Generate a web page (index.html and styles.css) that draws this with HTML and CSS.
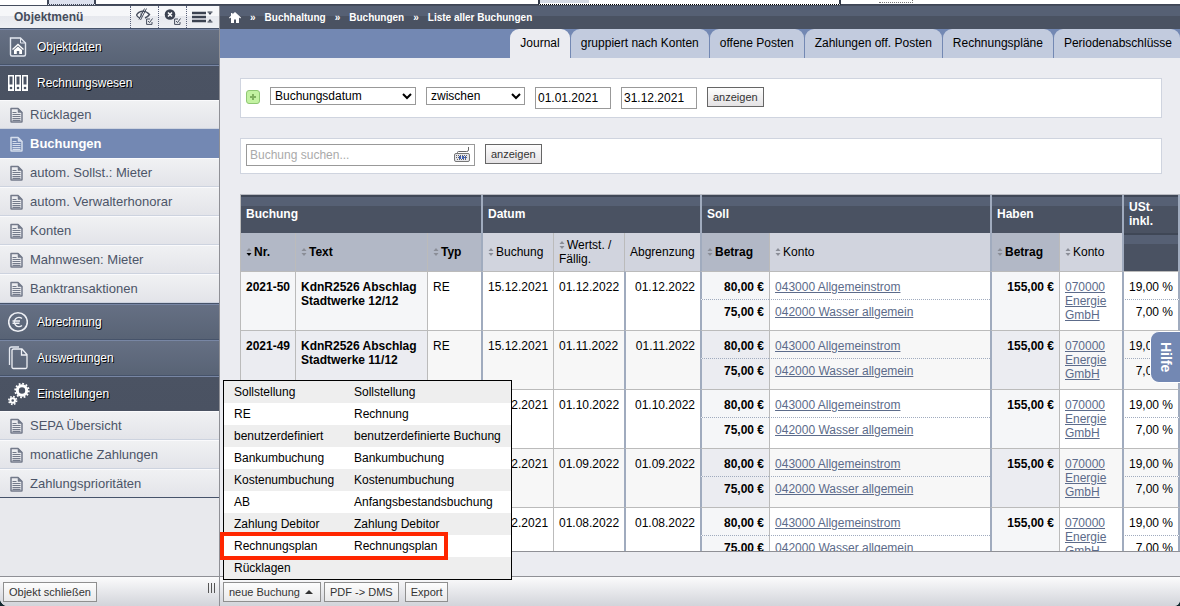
FILE: index.html
```html
<!DOCTYPE html>
<html lang="de">
<head>
  <meta charset="UTF-8" />
  <title>Liste aller Buchungen</title>
  <link rel="stylesheet" href="styles.css">
</head>
<body>

<!-- shared icons -->
<svg class="icon-defs" width="0" height="0" aria-hidden="true">
  <symbol id="icon-doc" viewBox="0 0 14 16">
    <path d="M1.500 1.500h7l4 4v9q0 .5-.5.5h-10q-.5 0-.5-.5z" fill="none" stroke="currentColor" stroke-width="1.500" stroke-linejoin="round"/>
    <path d="M8.500 1.500v4h4z" fill="currentColor" stroke="currentColor" stroke-width=".5"/>
    <path d="M3 5.500h4M3 7.500h8M3 9.500h8M3 11.500h8M3 13.300h8" stroke="currentColor" stroke-width="1.200"/>
  </symbol>
  <symbol id="icon-sort" viewBox="0 0 6 8">
    <path d="M3 0l2.500 3h-5z" fill="#8a8d96"/>
    <path d="M3 8l2.500-3h-5z" fill="currentColor"/>
  </symbol>
  <symbol id="icon-check" viewBox="0 0 7 7">
    <path d="M4 1H.6v5.400H6V4M2 3l1.500 1.600L6.500.5" fill="none" stroke="#454c5c"/>
  </symbol>
</svg>

<div class="app">
  <div class="top-strip">
    <span class="strip-tab"></span>
    <span class="strip-line"></span>
    <span class="strip-panel"><span class="strip-fill"></span></span>
    <span class="strip-rest"><span class="strip-dots"></span></span>
  </div>

  <div class="columns">
    <aside class="sidebar">
      <div class="sidebar-head">
        <h2>Objektmenü</h2>
        <button class="head-btn" aria-label="Ausblenden">
          <svg width="19" height="18" viewBox="0 0 19 18">
            <path d="M1.500 7C4 2.500 10 1.500 14.500 6.500c-1.500 2-3 3-4.500 3.500M1.500 7c.8 1.500 2 2.500 3.200 3" fill="none" stroke="#454c5c" stroke-width="1.400"/>
            <path d="M6.500 4c-1.700 2-1 4.500 0 5z" fill="#454c5c"/>
            <path d="M11.500 .5L5.500 12M9.500 .5L4 11.500" stroke="#454c5c" stroke-width="1"/>
            <use href="#icon-check" x="11" y="10" width="7" height="7"/>
          </svg>
        </button>
        <button class="head-btn" aria-label="Schließen">
          <svg width="19" height="18" viewBox="0 0 19 18">
            <circle cx="7" cy="6.500" r="5.300" fill="#3b4250"/>
            <path d="M5 4.500l4 4m0-4l-4 4" stroke="#fff" stroke-width="1.600"/>
            <use href="#icon-check" x="11" y="10" width="7" height="7"/>
          </svg>
        </button>
        <button class="head-btn head-btn-wide" aria-label="Menü einklappen">
          <svg width="22" height="14" viewBox="0 0 22 14">
            <path d="M0 3h14M0 7h14M0 11h14" stroke="#3b4250" stroke-width="2.600"/>
            <path d="M15.500 2h5M15.500 12h5" stroke="#3b4250"/>
            <path d="M16 2.500h4l-2 2.500zM16 11.500h4l-2-2.500z" fill="#3b4250"/>
          </svg>
        </button>
      </div>

      <nav>
        <a class="group" href="#">
          <svg width="20" height="22" viewBox="0 0 20 22">
            <path d="M2.500 2h10l5 5v11.500q0 1.500-1.500 1.500h-12q-1.500 0-1.500-1.500z" fill="none" stroke="#e4e8f0" stroke-width="1.400"/>
            <path d="M12.500 2v5h5" fill="none" stroke="#e4e8f0"/>
            <path d="M4.500 13.500L10 8.500l5.500 5" fill="none" stroke="#fff" stroke-width="1.300"/>
            <path d="M6 14l4-3.500 4 3.500v4h-2.800v-3H8.800v3H6z" fill="#fff"/>
          </svg>
          Objektdaten
        </a>
        <a class="group open" href="#">
          <svg width="20" height="18" viewBox="0 0 20 18">
            <g fill="#fff"><path d="M0 1h6v16H0zM7 1h6v16H7zM14 1h6v16h-6z"/></g>
            <g fill="#4a5263"><path d="M1.500 2.500h3v8h-3zM8.500 2.500h3v8h-3zM15.500 2.500h3v8h-3z"/><circle cx="3" cy="14" r="1.300"/><circle cx="10" cy="14" r="1.300"/><circle cx="17" cy="14" r="1.300"/></g>
          </svg>
          Rechnungswesen
        </a>
        <a class="item" href="#"><svg><use href="#icon-doc"/></svg>Rücklagen</a>
        <a class="item active" href="#"><svg><use href="#icon-doc"/></svg>Buchungen</a>
        <a class="item" href="#"><svg><use href="#icon-doc"/></svg>autom. Sollst.: Mieter</a>
        <a class="item" href="#"><svg><use href="#icon-doc"/></svg>autom. Verwalterhonorar</a>
        <a class="item" href="#"><svg><use href="#icon-doc"/></svg>Konten</a>
        <a class="item" href="#"><svg><use href="#icon-doc"/></svg>Mahnwesen: Mieter</a>
        <a class="item" href="#"><svg><use href="#icon-doc"/></svg>Banktransaktionen</a>
        <a class="group" href="#">
          <svg width="20" height="22" viewBox="0 0 20 22">
            <circle cx="10" cy="11" r="9.300" fill="none" stroke="#eef0f5" stroke-width="1.600"/>
            <path d="M14 7.500a4.600 4.600 0 1 0 0 7M4.500 10h7.500M4.500 12.200h7" fill="none" stroke="#eef0f5" stroke-width="1.400"/>
          </svg>
          Abrechnung
        </a>
        <a class="group" href="#">
          <svg width="20" height="24" viewBox="0 0 20 24">
            <path d="M1.500 19V3q0-2 2-2H11" fill="none" stroke="#e4e8f0" stroke-width="1.300"/>
            <path d="M5.500 3h8.500l5 5.500v12.500q0 1.500-1.500 1.500h-12q-1.500 0-1.500-1.500v-16.500q0-1.500 1.500-1.500zM13.500 3v6H19" fill="none" stroke="#eef0f5" stroke-width="1.300"/>
          </svg>
          Auswertungen
        </a>
        <a class="group open" href="#">
          <svg width="24" height="24" viewBox="0 0 24 24">
            <circle cx="14" cy="8.500" r="4.700" fill="none" stroke="#fff" stroke-width="3"/>
            <circle cx="14" cy="8.500" r="6.800" fill="none" stroke="#fff" stroke-width="1.800" stroke-dasharray="1.800 1.760"/>
            <circle cx="4.700" cy="18.500" r="2.300" fill="none" stroke="#fff" stroke-width="2"/>
            <circle cx="4.700" cy="18.500" r="3.900" fill="none" stroke="#fff" stroke-width="1.600" stroke-dasharray="1.600 1.460"/>
          </svg>
          Einstellungen
        </a>
        <a class="item" href="#"><svg><use href="#icon-doc"/></svg>SEPA Übersicht</a>
        <a class="item" href="#"><svg><use href="#icon-doc"/></svg>monatliche Zahlungen</a>
        <a class="item" href="#"><svg><use href="#icon-doc"/></svg>Zahlungsprioritäten</a>
      </nav>

      <div class="footer sidebar-footer">
        <button class="foot-btn">Objekt schließen</button>
        <span class="grip"></span>
      </div>
    </aside>

    <main class="main">
      <div class="breadcrumb">
        <a href="#" aria-label="Start">
          <svg width="12" height="11" viewBox="0 0 12 11"><path d="M6 0l6 5.500-.8.900L10 5.500V11H7V7.500H5V11H2V5.500l-1.200.9L0 5.500 2 3.700V1h1.500v1.300z" fill="#fff"/></svg>
        </a>
        <span>»</span>
        <a href="#">Buchhaltung</a>
        <span>»</span>
        <a href="#">Buchungen</a>
        <span>»</span>
        <a href="#">Liste aller Buchungen</a>
      </div>

      <div class="tabs">
        <a class="tab active" href="#">Journal</a>
        <a class="tab" href="#">gruppiert nach Konten</a>
        <a class="tab" href="#">offene Posten</a>
        <a class="tab" href="#">Zahlungen off. Posten</a>
        <a class="tab" href="#">Rechnungspläne</a>
        <a class="tab" href="#">Periodenabschlüsse</a>
      </div>

      <div class="content">
        <form class="panel filter-panel">
          <button type="button" class="add-btn" aria-label="Filter hinzufügen">
            <svg width="8" height="8" viewBox="0 0 8 8"><path d="M4 1v6M1 4h6" stroke="#7fb060" stroke-width="2"/></svg>
          </button>
          <select class="field-select" aria-label="Feld"><option>Buchungsdatum</option></select>
          <select class="op-select" aria-label="Vergleich"><option>zwischen</option></select>
          <input class="date-input" type="text" value="01.01.2021" aria-label="von">
          <input class="date-input" type="text" value="31.12.2021" aria-label="bis">
          <button type="button" class="show-btn">anzeigen</button>
        </form>

        <form class="panel search-panel">
          <div class="search-box">
            <input type="text" placeholder="Buchung suchen..." aria-label="Buchung suchen">
            <svg width="16" height="15" viewBox="0 0 16 15">
              <path d="M3.500 6V5.500q0-1 1-1h8q2 0 2-1.500V0" fill="none" stroke="#666"/>
              <rect x=".5" y="6.500" width="15" height="8" rx="1.500" fill="#e6e6ea" stroke="#777"/>
              <path d="M2 8.500h12M2 10.500h12M3 12.500h10" stroke="#666" stroke-dasharray="1 1"/>
              <path d="M5 10.500h7" stroke="#3f5fb0" stroke-width="3" stroke-dasharray="2 1"/>
            </svg>
          </div>
          <button type="button" class="show-btn">anzeigen</button>
        </form>

        <div class="table-wrap">
          <table class="journal">
            <colgroup>
              <col class="c-nr"><col class="c-text"><col class="c-typ">
              <col class="c-date"><col class="c-value"><col class="c-accrual">
              <col class="c-amount"><col>
              <col class="c-amount"><col class="c-account"><col class="c-tax">
            </colgroup>
            <thead>
              <tr class="head-main">
                <th colspan="3">Buchung</th>
                <th class="sep" colspan="3">Datum</th>
                <th class="sep" colspan="2">Soll</th>
                <th class="sep" colspan="2">Haben</th>
                <th class="sep end">USt. inkl.</th>
              </tr>
              <tr class="head-sub">
                <th class="key"><svg class="sort sorted"><use href="#icon-sort"/></svg>Nr.</th>
                <th class="key"><svg class="sort"><use href="#icon-sort"/></svg>Text</th>
                <th class="key"><svg class="sort"><use href="#icon-sort"/></svg>Typ</th>
                <th class="sep"><svg class="sort"><use href="#icon-sort"/></svg>Buchung</th>
                <th><svg class="sort"><use href="#icon-sort"/></svg>Wertst. / Fällig.</th>
                <th>Abgrenzung</th>
                <th class="sep key"><svg class="sort"><use href="#icon-sort"/></svg>Betrag</th>
                <th><svg class="sort"><use href="#icon-sort"/></svg>Konto</th>
                <th class="sep key"><svg class="sort"><use href="#icon-sort"/></svg>Betrag</th>
                <th><svg class="sort"><use href="#icon-sort"/></svg>Konto</th>
                <th class="sep end dark"></th>
              </tr>
            </thead>
            <tbody>
              <tr>
                <td class="key nr" rowspan="2">2021-50</td>
                <td class="key" rowspan="2">KdnR2526 Abschlag Stadtwerke 12/12</td>
                <td rowspan="2">RE</td>
                <td class="sep" rowspan="2">15.12.2021</td>
                <td rowspan="2">01.12.2022</td>
                <td class="sep num" rowspan="2">01.12.2022</td>
                <td class="sep key num">80,00 €</td>
                <td><a href="#">043000 Allgemeinstrom</a></td>
                <td class="sep key num" rowspan="2">155,00 €</td>
                <td rowspan="2"><a href="#">070000 Energie GmbH</a></td>
                <td class="sep end num">19,00 %</td>
              </tr>
              <tr class="split">
                <td class="sep key num">75,00 €</td>
                <td><a href="#">042000 Wasser allgemein</a></td>
                <td class="sep end num">7,00 %</td>
              </tr>
            </tbody>
            <tbody>
              <tr>
                <td class="key nr" rowspan="2">2021-49</td>
                <td class="key" rowspan="2">KdnR2526 Abschlag Stadtwerke 11/12</td>
                <td rowspan="2">RE</td>
                <td class="sep" rowspan="2">15.12.2021</td>
                <td rowspan="2">01.11.2022</td>
                <td class="sep num" rowspan="2">01.11.2022</td>
                <td class="sep key num">80,00 €</td>
                <td><a href="#">043000 Allgemeinstrom</a></td>
                <td class="sep key num" rowspan="2">155,00 €</td>
                <td rowspan="2"><a href="#">070000 Energie GmbH</a></td>
                <td class="sep end num">19,00 %</td>
              </tr>
              <tr class="split">
                <td class="sep key num">75,00 €</td>
                <td><a href="#">042000 Wasser allgemein</a></td>
                <td class="sep end num">7,00 %</td>
              </tr>
            </tbody>
            <tbody>
              <tr>
                <td class="key nr" rowspan="2">2021-48</td>
                <td class="key" rowspan="2">KdnR2526 Abschlag Stadtwerke 10/12</td>
                <td rowspan="2">RE</td>
                <td class="sep" rowspan="2">15.12.2021</td>
                <td rowspan="2">01.10.2022</td>
                <td class="sep num" rowspan="2">01.10.2022</td>
                <td class="sep key num">80,00 €</td>
                <td><a href="#">043000 Allgemeinstrom</a></td>
                <td class="sep key num" rowspan="2">155,00 €</td>
                <td rowspan="2"><a href="#">070000 Energie GmbH</a></td>
                <td class="sep end num">19,00 %</td>
              </tr>
              <tr class="split">
                <td class="sep key num">75,00 €</td>
                <td><a href="#">042000 Wasser allgemein</a></td>
                <td class="sep end num">7,00 %</td>
              </tr>
            </tbody>
            <tbody>
              <tr>
                <td class="key nr" rowspan="2">2021-47</td>
                <td class="key" rowspan="2">KdnR2526 Abschlag Stadtwerke 9/12</td>
                <td rowspan="2">RE</td>
                <td class="sep" rowspan="2">15.12.2021</td>
                <td rowspan="2">01.09.2022</td>
                <td class="sep num" rowspan="2">01.09.2022</td>
                <td class="sep key num">80,00 €</td>
                <td><a href="#">043000 Allgemeinstrom</a></td>
                <td class="sep key num" rowspan="2">155,00 €</td>
                <td rowspan="2"><a href="#">070000 Energie GmbH</a></td>
                <td class="sep end num">19,00 %</td>
              </tr>
              <tr class="split">
                <td class="sep key num">75,00 €</td>
                <td><a href="#">042000 Wasser allgemein</a></td>
                <td class="sep end num">7,00 %</td>
              </tr>
            </tbody>
            <tbody>
              <tr>
                <td class="key nr" rowspan="2">2021-46</td>
                <td class="key" rowspan="2">KdnR2526 Abschlag Stadtwerke 8/12</td>
                <td rowspan="2">RE</td>
                <td class="sep" rowspan="2">15.12.2021</td>
                <td rowspan="2">01.08.2022</td>
                <td class="sep num" rowspan="2">01.08.2022</td>
                <td class="sep key num">80,00 €</td>
                <td><a href="#">043000 Allgemeinstrom</a></td>
                <td class="sep key num" rowspan="2">155,00 €</td>
                <td rowspan="2"><a href="#">070000 Energie GmbH</a></td>
                <td class="sep end num">19,00 %</td>
              </tr>
              <tr class="split">
                <td class="sep key num">75,00 €</td>
                <td><a href="#">042000 Wasser allgemein</a></td>
                <td class="sep end num">7,00 %</td>
              </tr>
            </tbody>
          </table>
        </div>
      </div>

      <div class="footer">
        <div class="new-booking">
          <button class="foot-btn">neue Buchung <span class="caret"></span></button>
          <ul class="menu">
            <li><a href="#"><span>Sollstellung</span><span>Sollstellung</span></a></li>
            <li><a href="#"><span>RE</span><span>Rechnung</span></a></li>
            <li><a href="#"><span>benutzerdefiniert</span><span>benutzerdefinierte Buchung</span></a></li>
            <li><a href="#"><span>Bankumbuchung</span><span>Bankumbuchung</span></a></li>
            <li><a href="#"><span>Kostenumbuchung</span><span>Kostenumbuchung</span></a></li>
            <li><a href="#"><span>AB</span><span>Anfangsbestandsbuchung</span></a></li>
            <li><a href="#"><span>Zahlung Debitor</span><span>Zahlung Debitor</span></a></li>
            <li class="marked"><a href="#"><span>Rechnungsplan</span><span>Rechnungsplan</span></a></li>
            <li><a href="#"><span>Rücklagen</span></a></li>
          </ul>
        </div>
        <button class="foot-btn">PDF -&gt; DMS</button>
        <button class="foot-btn export-btn">Export</button>
      </div>
    </main>
  </div>

  <button class="help-btn">Hilfe</button>
</div>

</body>
</html>
```
FILE: styles.css
```css
*,
*::before,
*::after {
  box-sizing: border-box;
  margin: 0;
  padding: 0;
}

body {
  background: #12292e;
  font-family: "Liberation Sans", Arial, sans-serif;
  font-size: 12px;
  line-height: 14px;
  color: #000;
}

a {
  color: inherit;
  text-decoration: none;
}

button,
input,
select {
  font: inherit;
}

.icon-defs {
  position: absolute;
}

.app {
  display: flex;
  flex-direction: column;
  height: 100vh;
  background: #e8e9ed;
  border-radius: 0 0 6px 8px;
  overflow: hidden;
}

/* strip above the window */
.top-strip {
  display: flex;
  height: 6px;
  background: #fff;
  border-bottom: 1px solid #454d5d;
  padding-left: 47px;
}

.strip-tab {
  width: 49px;
  background: #dce1ee;
  border: 2px solid #3f4656;
  border-top: 0;
  border-bottom: 1px dotted #3f4656;
}

.strip-line {
  width: 442px;
  border-bottom: 1px solid #3f4656;
}

.strip-panel {
  width: 303px;
  border: 2px solid #333a48;
  border-top: 0;
  border-bottom: 1px dotted #000;
}

.strip-fill {
  display: block;
  width: 49px;
  height: 3px;
  background: #d5dae4;
}

.strip-rest {
  flex: 1;
  border-bottom: 1px solid #3f4656;
  padding-left: 38px;
}

.strip-dots {
  display: block;
  width: 34px;
  height: 3px;
  border-right: 1px dotted #777;
  border-bottom: 1px dotted #777;
}

.columns {
  display: flex;
  flex: 1;
  min-height: 0;
}

/* sidebar */
.sidebar {
  display: flex;
  flex-direction: column;
  width: 220px;
  border-right: 1px solid #8f9096;
  background: #e8e9ed;
}

.sidebar-head {
  display: flex;
  height: 22px;
  background: linear-gradient(#f6f7f9 0 10px, #e6e8ed 10px, #eef0f3);
}

.sidebar-head h2 {
  flex: 1;
  padding-left: 14px;
  font-size: 12px;
  line-height: 22px;
  color: #454c5c;
}

.head-btn {
  display: flex;
  align-items: center;
  justify-content: center;
  width: 28px;
  border: 0;
  border-left: 1px dotted #59617a;
  background: none;
}

.head-btn-wide {
  width: 33px;
}

.sidebar nav {
  flex: 1;
  min-height: 0;
}

.group {
  display: grid;
  grid-template-columns: 30px 1fr;
  align-items: center;
  height: 36px;
  padding-left: 7px;
  background: linear-gradient(#667084, #586375);
  border-top: 1px solid #46536a;
  box-shadow: inset 0 1px #7886a4;
  color: #fff;
  text-shadow: 1px 1px 0 #000;
}

.group svg {
  margin-left: 1px;
}

.group.open {
  background: linear-gradient(#4b5363, #4a5262);
}

.item {
  display: flex;
  align-items: center;
  gap: 6px;
  height: 29px;
  padding-left: 9px;
  background: linear-gradient(#f0f1f3, #e3e4e9);
  border-top: 1px solid #fafafc;
  border-bottom: 1px solid #cdd3df;
  font-size: 13px;
  color: #4c5568;
}

.item svg {
  width: 15px;
  height: 16px;
  color: #737a8a;
}

.item.active {
  background: #7388b3;
  border-color: #7388b3;
  color: #fff;
  font-weight: bold;
}

.item.active svg {
  color: #d5ddec;
}

.item:last-child {
  border-bottom-color: #46536a;
}

/* bottom bars */
.footer {
  display: flex;
  align-items: center;
  flex-shrink: 0;
  height: 30px;
  padding: 0 3px;
  border-top: 1px solid #8f9096;
  background: linear-gradient(#fbfbfc, #d2d4da);
}

.sidebar-footer {
  justify-content: space-between;
}

.foot-btn {
  display: block;
  height: 20px;
  padding: 0 5px;
  border: 1px solid #8f8f8f;
  background: linear-gradient(#fdfdfd, #e9e9ea);
  font-size: 11px;
  color: #333;
}

.grip {
  width: 8px;
  height: 10px;
  margin-bottom: 8px;
  background: repeating-linear-gradient(90deg, #555 0 1px, transparent 1px 3px);
}

.caret {
  display: inline-block;
  margin: 0 2px 2px;
  border: 4px solid transparent;
  border-top: 0;
  border-bottom-color: #333;
}

.export-btn {
  margin-left: 6px;
}

.new-booking {
  position: relative;
  margin-right: 3px;
}

.menu {
  position: absolute;
  left: 0;
  bottom: 22px;
  z-index: 2;
  width: 289px;
  border: 1px solid #000;
  background: #fff;
  list-style: none;
}

.menu li:nth-child(odd) {
  background: #eee;
}

.menu a {
  display: grid;
  grid-template-columns: 120px 1fr;
  padding: 4px 10px;
  white-space: nowrap;
}

.menu .marked {
  position: relative;
}

.marked::after {
  content: "";
  position: absolute;
  inset: -3px auto -3px -4px;
  z-index: 1;
  width: 228px;
  border: 4px solid #ff2600;
  pointer-events: none;
}

/* main area */
.main {
  display: flex;
  flex-direction: column;
  flex: 1;
  min-width: 0;
}

.breadcrumb {
  display: flex;
  align-items: center;
  gap: 9px;
  flex-shrink: 0;
  height: 23px;
  padding-left: 9px;
  background: linear-gradient(#566074 0 10px, #4a5262 10px);
  color: #fff;
  font-size: 10px;
  font-weight: bold;
}

.breadcrumb svg {
  display: block;
}

.tabs {
  display: flex;
  justify-content: flex-end;
  gap: 1px;
  flex-shrink: 0;
  height: 29px;
  background: #7388b3;
}

.tab {
  padding: 7px 10px;
  border-radius: 9px 9px 0 0;
  background: #c2cbde;
  white-space: nowrap;
}

.tab.active {
  background: #ebecf1;
}

.tab:last-child {
  padding-right: 8px;
}

.content {
  display: flex;
  flex-direction: column;
  flex: 1;
  min-height: 0;
  padding: 20px 0 24px 20px;
  background: #ebecf1;
}

.panel {
  display: flex;
  align-items: flex-start;
  gap: 10px;
  flex-shrink: 0;
  margin: 0 18px 20px 0;
  border: 1px solid #cfd4df;
  background: #fff;
}

.filter-panel {
  height: 40px;
  padding: 8px 5px;
}

.search-panel {
  height: 36px;
  padding: 5px;
}

.add-btn {
  display: flex;
  align-items: center;
  justify-content: center;
  width: 14px;
  height: 14px;
  margin-top: 3px;
  border: 1px solid #8fc774;
  border-radius: 3px;
  background: #c3f2a2;
}

select {
  height: 18px;
  border: 1px solid #999;
  background-color: #fff;
}

.field-select {
  width: 146px;
}

.op-select {
  width: 99px;
}

input {
  border: 1px solid #999;
  background: #fff;
}

.date-input {
  width: 76px;
  height: 22px;
  padding: 0 2px;
}

.show-btn {
  height: 20px;
  padding: 0 5px;
  border: 1px solid #666;
  background: linear-gradient(#fdfdfd, #e4e2e4);
  font-size: 11px;
  color: #333;
}

.search-box {
  position: relative;
}

.search-box input {
  display: block;
  width: 229px;
  height: 22px;
  padding: 0 24px 0 3px;
}

.search-box input::placeholder {
  color: #aaa;
}

.search-box svg {
  position: absolute;
  right: 5px;
  top: 3px;
}

/* journal table */
.table-wrap {
  flex: 1;
  min-height: 0;
  border-bottom: 1px solid #8f9096;
  overflow: hidden;
}

.journal {
  width: 100%;
  table-layout: fixed;
  border-collapse: separate;
  border-spacing: 0;
  border-top: 1px solid #b9bbc2;
}

.c-nr { width: 55px; }
.c-text { width: 132px; }
.c-typ { width: 54px; }
.c-date { width: 72px; }
.c-value { width: 71px; }
.c-accrual { width: 76px; }
.c-amount { width: 69px; }
.c-account { width: 63px; }
.c-tax { width: 58px; }

.journal th,
.journal td {
  padding-left: 5px;
  padding-right: 5px;
  border-left: 1px solid #bbb;
  text-align: left;
}

.journal .nr {
  white-space: nowrap;
}

.journal .sep {
  border-left: 2px solid #a0abbe;
}

.journal .end {
  border-right: 2px solid #a0abbe;
}

.head-main th,
.head-sub .dark {
  height: 38px;
  background: linear-gradient(#3f4756 0 2px, #566074 2px 11px, #4a5262 11px);
  color: #fff;
}

.head-sub th {
  height: 38px;
  font-weight: normal;
}

.head-sub th:not(.dark) {
  background: #d1d4de;
}

.head-sub th.key {
  background: #b2b8c6;
  font-weight: bold;
}

.sort {
  width: 6px;
  height: 8px;
  margin-right: 2px;
  color: #8a8d96;
}

.sort.sorted {
  color: #000;
}

.journal td {
  height: 28px;
  padding-top: 8px;
  border-top: 1px solid #bbb;
  background: #fff;
  vertical-align: top;
}

.journal .split td {
  height: 31px;
  padding-top: 5px;
  border-top: 1px dotted #a0abbe;
}

.journal td.key {
  background: #f5f6f8;
  font-weight: bold;
}

.journal tbody:nth-of-type(even) td {
  background: #f7f7f7;
}

.journal tbody:nth-of-type(even) td.key {
  background: #ebecf1;
}

.journal td.num {
  text-align: right;
  white-space: nowrap;
}

.journal td a {
  color: #5c6b8a;
  text-decoration: underline;
}

.help-btn {
  position: absolute;
  top: 331px;
  right: 0;
  width: 30px;
  height: 52px;
  border: 1px solid #fff;
  border-right: 0;
  border-radius: 9px 0 0 9px;
  background: #7388b3;
  color: #fff;
  font-size: 14px;
  font-weight: bold;
  writing-mode: vertical-rl;
}
```
